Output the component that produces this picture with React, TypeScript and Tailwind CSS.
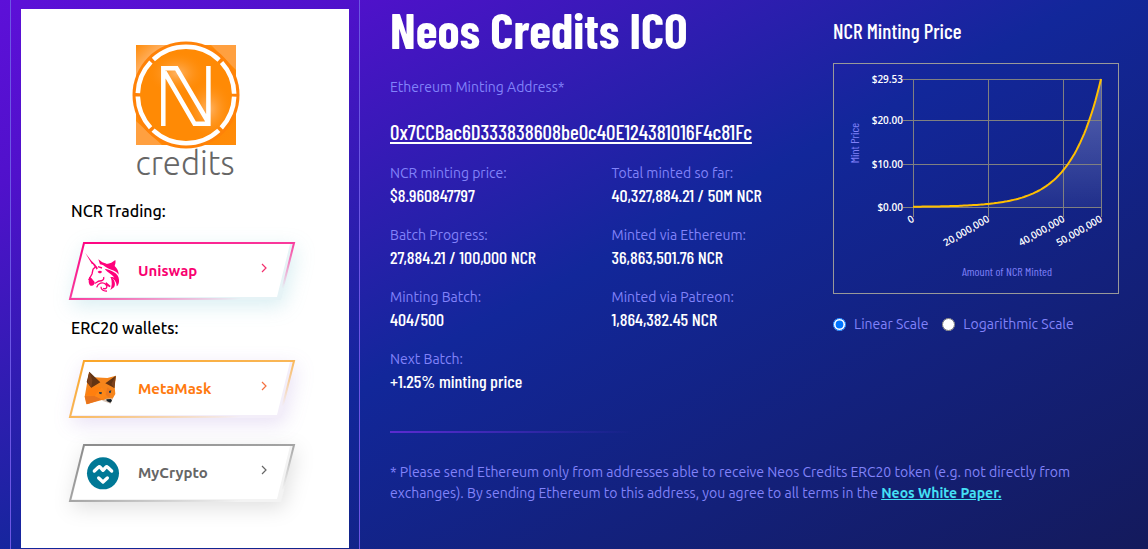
import { useState } from "react";
import type { ReactNode } from "react";

const stats = [
  { label: "NCR minting price:", value: "$8.960847797" },
  { label: "Total minted so far:", value: "40,327,884.21 / 50M NCR" },
  { label: "Batch Progress:", value: "27,884.21 / 100,000 NCR" },
  { label: "Minted via Ethereum:", value: "36,863,501.76 NCR" },
  { label: "Minting Batch:", value: "404/500" },
  { label: "Minted via Patreon:", value: "1,864,382.45 NCR" },
  { label: "Next Batch:", value: "+1.25% minting price" },
];

function CreditsLogo() {
  return (
    <svg viewBox="-2 0 112 140" width="112" height="140" className="overflow-visible" role="img" aria-label="Neos credits">
      <defs>
        <linearGradient id="logoSquare" x1="0" y1="0" x2="1" y2="1">
          <stop offset="0" stopColor="#ff8c0a" />
          <stop offset="0.14" stopColor="#ffb061" />
          <stop offset="0.4" stopColor="#ff8a05" />
          <stop offset="0.85" stopColor="#ff8a05" />
          <stop offset="1" stopColor="#ff8c0a" />
        </linearGradient>
        <radialGradient id="glow">
          <stop offset="0" stopColor="#ffb466" />
          <stop offset="1" stopColor="#ff8a05" stopOpacity="0" />
        </radialGradient>
      </defs>
      <rect x="5" y="4" width="100" height="100" fill="url(#logoSquare)" />
      <path d="M80 4h25v25zM5 80v24h26z" fill="#ffa040" />
      <circle cx="55" cy="54" r="53.5" fill="#ff8208" />
      <circle cx="55" cy="54" r="46" fill="#ff8a05" />
      <ellipse cx="46" cy="32" rx="30" ry="22" fill="url(#glow)" />
      <ellipse cx="78" cy="68" rx="24" ry="30" fill="url(#glow)" />
      <circle
        cx="55"
        cy="54"
        r="48.2"
        fill="none"
        stroke="#fff"
        strokeWidth="4.6"
        strokeDasharray="34.35 3.5 72.2 3.5 34.35 3.5"
        strokeDashoffset="-1.75"
      />
      <path
        d="M32.300 85V27.300H45.500L76.500 80M33.500 31L63.500 82.700H77.400V25"
        fill="none"
        stroke="#fff"
        strokeWidth="4.5"
      />
      <text
        x="54"
        y="134"
        textAnchor="middle"
        fontSize="33"
        fontWeight="300"
        fill="#666"
        className="font-['Ubuntu','Open_Sans',sans-serif]"
      >
        credits
      </text>
    </svg>
  );
}

function UniswapIcon() {
  return (
    <svg viewBox="0 0 150 150" width="50" height="50" fill="#ff007a" aria-hidden="true">
      <path d="M16 21L40 52 36 55zM28 38L48 58 44 63zM36 48L54 66 50 71z" />
      <path d="M55 40l12 9 13 4-8 5-12-3z" />
      <path d="M66 54c12 2 20-2 28-4l12-8c2 9-1 13-2 18 8 8 12 16 12 26-6-9-13-12-22-15-10-2-19-9-28-17z" />
      <path d="M74 68c18 4 42 12 43 33 1 9-2 17-7 20 0-17-10-22-20-28 6 0 9 0 13 2-6-11-20-14-29-27z" />
      <path d="M92 92c10 7 17 20 10 32l-11 8c5-11 6-25 1-40z" />
      <g fill="none" stroke="#ff007a" strokeWidth="4" strokeLinejoin="round">
        <path d="M49 60L39 70 36 84 26 102" />
        <path d="M44 112c6-1 8-7 15-7 8 0 14-4 12-12" />
        <path d="M50 124c4-13 18-17 27-9 8 8 1 16-8 12 M63 122c0 9 7 14 18 13M54 62l12 4" />
      </g>
      <path d="M28 92l6 4 10 12c0 8-5 13-12 11-7-4-7-15-4-27zM53 77c5-4 10-3 13 0-3 6-9 6-13 0zM78 108l14 12-3 4-13-8z" />
    </svg>
  );
}

function MetaMaskIcon() {
  return (
    <svg viewBox="0 0 150 150" width="50" height="50" aria-hidden="true">
      <path d="M27 25L41 40 82 42 108 35 104 68 106 90 91 116 66 108 19 121 14 98z" fill="#f6851b" />
      <path d="M32 67L65 71 44 96 18 92z" fill="#ff7f0e" />
      <path d="M44 96L14 97l7 24 47-16z" fill="#e8741d" />
      <path d="M65 70l17 22-18 14-20-10z" fill="#ff8716" />
      <path d="M28 23l33 32-27 16-14-17zM107 35L76 58l27 14z" fill="#633413" />
      <path d="M28 23l-6 31 12 18 3-23zM107 35l-13 25 9 13z" fill="#7c421b" />
      <path d="M82 70l12 8-6 23-11-9z" fill="#ee791d" />
      <path d="M57 84l9 1-2 6-6-2zM87 81l7-2-2 8-5-1z" fill="#263b4a" />
      <path d="M66 110l13-6 19-1-6 16-14-5z" fill="#d9c6b7" />
      <path d="M79 106l14-1 3 5-5 6-11-5z" fill="#172027" />
    </svg>
  );
}

function MyCryptoIcon() {
  return (
    <svg viewBox="0 0 150 150" width="50" height="50" aria-hidden="true">
      <circle cx="69" cy="76" r="48" fill="#007896" />
      <path
        d="M43 69l12-11q3-3 6 0l8 9 8-9q3-3 6 0l12 11"
        fill="none"
        stroke="#fff"
        strokeWidth="10"
        strokeLinecap="round"
        strokeLinejoin="round"
      />
      <path d="M56 90l13 12 13-12" fill="none" stroke="#fff" strokeWidth="10" strokeLinecap="round" strokeLinejoin="round" />
    </svg>
  );
}

function WalletLink({
  id,
  name,
  color,
  tint,
  textClass,
  shadowClass,
  arrow,
  icon,
}: {
  id: string;
  name: string;
  color: string;
  tint: string;
  textClass: string;
  shadowClass: string;
  arrow: string;
  icon: ReactNode;
}) {
  return (
    <a href={`#${id}`} className="relative flex h-[58px] w-[226px] items-center">
      <svg viewBox="0 0 226 58" className={`absolute inset-0 h-full w-full overflow-visible ${shadowClass}`} aria-hidden="true">
        <defs>
          <linearGradient id={`edge-${id}`} x1="0" y1="0" x2="1" y2="1">
            <stop offset="0" stopColor={color} />
            <stop offset="0.5" stopColor={color} stopOpacity="0.75" />
            <stop offset="0.88" stopColor={color} stopOpacity="0" />
          </linearGradient>
        </defs>
        <path d="M14 0H226L212 58H0z" fill={tint} />
        <path d="M16 2H221L208 55H3z" fill="#fff" />
        <path d="M15 1H225L211 57H1z" fill="none" stroke={`url(#edge-${id})`} strokeWidth="2" />
      </svg>
      <span className="relative ml-[11px] w-[58px]">{icon}</span>
      <span className={`relative flex-1 text-[15px] font-bold ${textClass}`}>{name}</span>
      <svg viewBox="0 0 8 10" width="8" height="10" className="relative mr-[27px] mb-1.5" aria-hidden="true">
        <path d="M2 1l4 4-4 4" fill="none" stroke={arrow} strokeWidth="1.2" />
      </svg>
    </a>
  );
}

const MAX_SUPPLY = 50;
const MAX_PRICE = 29.53;
const START_PRICE = MAX_PRICE / Math.pow(1.0125, 500);

const chartX = (millions: number) => 80 + (millions / MAX_SUPPLY) * 188;

function PriceChart({ log }: { log: boolean }) {
  const chartY = (price: number) =>
    log
      ? 144 - (Math.log(Math.max(price, START_PRICE) / START_PRICE) / Math.log(MAX_PRICE / START_PRICE)) * 128
      : 144 - (price / MAX_PRICE) * 128;

  const points = Array.from({ length: 101 }, (_, i) => {
    const price = START_PRICE * Math.pow(1.0125, i * 5);
    return `${chartX(i / 2).toFixed(1)},${chartY(price).toFixed(1)}`;
  });
  const line = `M${points.join("L")}`;

  return (
    <svg viewBox="0 0 286 231" className="block w-full" role="img" aria-label="NCR minting price chart">
      <defs>
        <linearGradient id="area" x1="0" y1="0" x2="0" y2="1">
          <stop offset="0" stopColor="#fff" stopOpacity="0.3" />
          <stop offset="1" stopColor="#fff" stopOpacity="0.06" />
        </linearGradient>
      </defs>
      <rect x="0.5" y="0.5" width="285" height="230" fill="none" stroke="#999" />
      <path d={`${line}L268,144L80,144Z`} fill="url(#area)" />
      <g stroke="#808080" shapeRendering="crispEdges">
        {[0, 10, 20, MAX_PRICE].map((p) => (
          <line key={p} x1="70" x2="268" y1={chartY(p) + 0.5} y2={chartY(p) + 0.5} />
        ))}
        {[0, 20, 40, 50].map((m) => (
          <line key={m} x1={chartX(m) + 0.5} x2={chartX(m) + 0.5} y1="16" y2="154" />
        ))}
      </g>
      <path d={line} fill="none" stroke="#ffbf00" strokeWidth="2" />
      <g className="font-['Open_Sans',sans-serif]" fontSize="10" fontWeight="600" fill="#fff" textAnchor="end">
        {[0, 10, 20, MAX_PRICE].map((p) => (
          <text key={p} x="70" y={chartY(p) + 4}>
            ${p.toFixed(2)}
          </text>
        ))}
        {[0, 20, 40, 50].map((m) => (
          <text key={m} transform={`translate(${chartX(m) + 2} 158) rotate(-30)`}>
            {(m * 1000000).toLocaleString("en-US")}
          </text>
        ))}
      </g>
      <g className="font-['Barlow_Condensed',sans-serif]" fontSize="12" fill="#7f80f8" textAnchor="middle">
        <text x="174" y="213">Amount of NCR Minted</text>
        <text transform="translate(26 80) rotate(-90)">Mint Price</text>
      </g>
    </svg>
  );
}

export default function App() {
  const [scale, setScale] = useState("linear");

  return (
    <div className="flex min-h-screen items-stretch bg-[linear-gradient(152deg,#5d10d8_0%,#5011cb_16%,#12279a_50%,#141a5c_100%)] font-['Ubuntu','Open_Sans',sans-serif] text-[14px] leading-[22px] text-[#8283fa]">
      <aside className="ml-2.5 flex w-[350px] shrink-0 border-x border-[#6c57e4] px-2.5 pt-[9px] pb-px">
        <div className="flex-1 bg-white px-12 pb-[46px] text-[16px] text-black">
          <div className="flex justify-center pt-8">
            <CreditsLogo />
          </div>
          <h2 className="mt-[19px] px-0.5 font-medium">NCR Trading:</h2>
          <div className="mt-5">
            <WalletLink
              id="uniswap"
              name="Uniswap"
              color="#ff0080"
              tint="#e6f3f6"
              textClass="text-[#f90070]"
              shadowClass="drop-shadow-[2px_6px_10px_rgba(60,170,190,0.2)]"
              arrow="#f2306e"
              icon={<UniswapIcon />}
            />
          </div>
          <h2 className="mt-[17px] px-0.5 font-medium">ERC20 wallets:</h2>
          <div className="mt-[21px] flex flex-col gap-[26px]">
            <WalletLink
              id="metamask"
              name="MetaMask"
              color="#fba524"
              tint="#f3eef9"
              textClass="text-[#ff7a0f]"
              shadowClass="drop-shadow-[2px_6px_10px_rgba(120,70,190,0.16)]"
              arrow="#f4703f"
              icon={<MetaMaskIcon />}
            />
            <WalletLink
              id="mycrypto"
              name="MyCrypto"
              color="#8a8a8a"
              tint="#f3f3f3"
              textClass="text-[#666]"
              shadowClass="drop-shadow-[2px_6px_10px_rgba(0,0,0,0.12)]"
              arrow="#666"
              icon={<MyCryptoIcon />}
            />
          </div>
        </div>
      </aside>

      <main className="flex-1 pr-[29px] pl-[30px]">
        <div className="grid grid-cols-[443fr_286fr]">
          <section>
            <h1 className="font-['Barlow_Condensed',sans-serif] text-[50px] leading-[58px] font-bold text-white">
              Neos Credits ICO
            </h1>
            <p className="mt-[18px]">Ethereum Minting Address*</p>
            <a
              href="#address"
              className="mt-[23px] block font-['Barlow_Condensed',sans-serif] text-[21px] font-medium text-white underline decoration-2 underline-offset-2"
            >
              0x7CCBac6D333838608be0c40E124381016F4c81Fc
            </a>
            <dl className="mt-[19px] grid grid-cols-2 gap-y-[18px]">
              {stats.map((s) => (
                <div key={s.label}>
                  <dt>{s.label}</dt>
                  <dd className="font-['Barlow_Condensed',sans-serif] text-[18px] font-medium whitespace-nowrap text-white">
                    {s.value}
                  </dd>
                </div>
              ))}
            </dl>
          </section>

          <section>
            <h2 className="pt-[19px] font-['Barlow_Condensed',sans-serif] text-[21px] leading-6 font-medium text-white">
              NCR Minting Price
            </h2>
            <div className="mt-5">
              <PriceChart log={scale === "log"} />
            </div>
            <div className="mt-[19px] flex gap-3.5 whitespace-nowrap">
              <label className="flex items-center gap-2">
                <input type="radio" name="scale" checked={scale === "linear"} onChange={() => setScale("linear")} />
                Linear Scale
              </label>
              <label className="flex items-center gap-2">
                <input type="radio" name="scale" checked={scale === "log"} onChange={() => setScale("log")} />
                Logarithmic Scale
              </label>
            </div>
          </section>
        </div>

        <hr className="mt-[39px] h-0.5 w-1/3 border-0 bg-linear-to-r from-[#5b2bd0] to-transparent" />
        <p className="mt-[29px] pr-5 leading-[21px]">
          * Please send Ethereum only from addresses able to receive Neos Credits ERC20 token (e.g. not directly from
          exchanges). By sending Ethereum to this address, you agree to all terms in the{" "}
          <a href="#white-paper" className="font-bold text-[#45e0f5] underline">
            Neos White Paper.
          </a>
        </p>
      </main>
    </div>
  );
}
